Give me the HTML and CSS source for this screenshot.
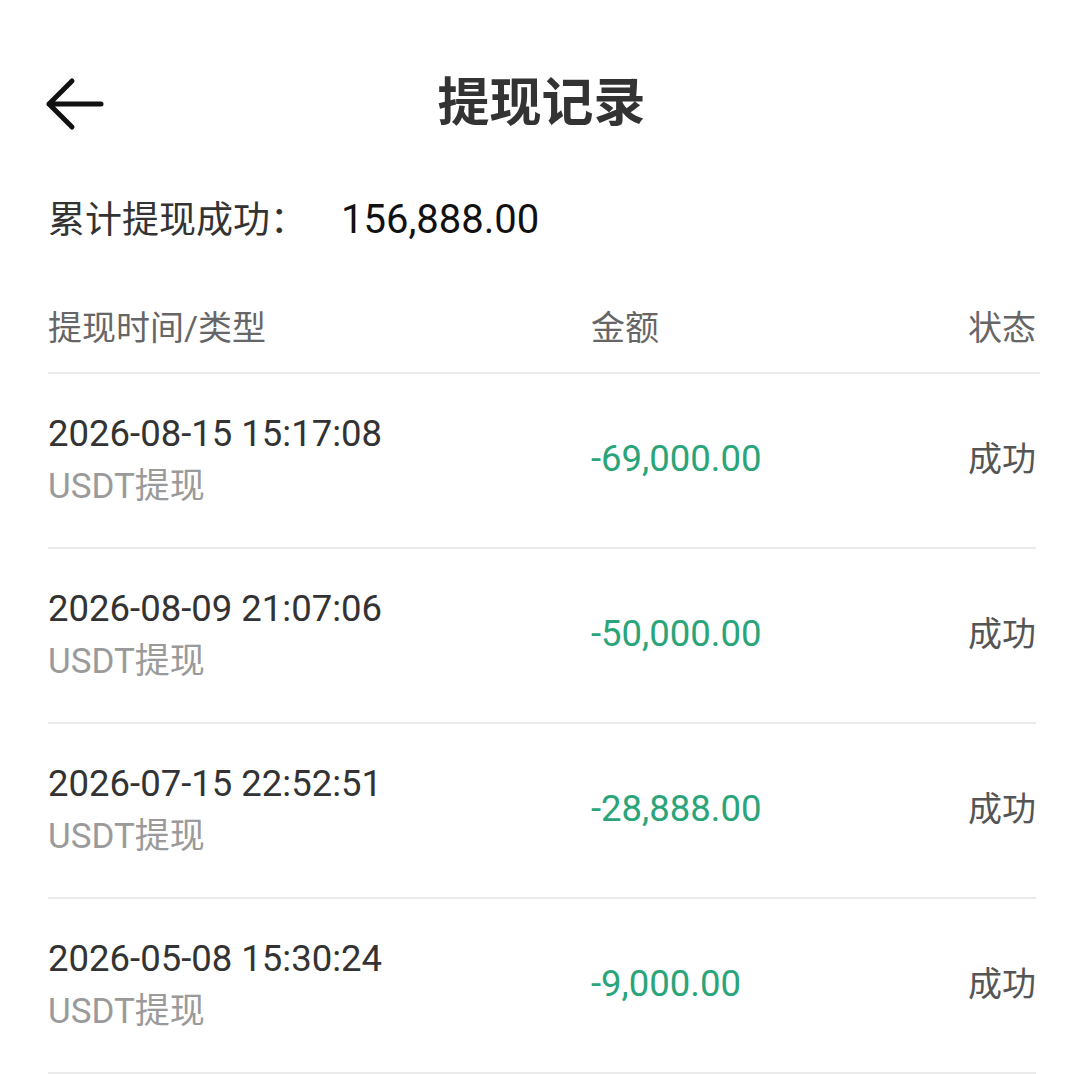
FILE: index.html
```html
<!DOCTYPE html>
<html lang="zh-CN">
<head>
  <meta charset="UTF-8" />
  <meta name="viewport" content="width=device-width, initial-scale=1.0"/>
  <title>提现记录</title>
  <link rel="stylesheet" href="styles.css">
</head>
<body>

  <div class="page">
    <!-- Top bar -->
    <div class="topbar">
      <span class="back">
        <svg width="60" height="54" viewBox="0 0 60 54">
          <path d="M56 27 H4 M27 4 L4 27 L27 50" fill="none" stroke="#111" stroke-width="5" stroke-linecap="round" stroke-linejoin="round"/>
        </svg>
      </span>
      <h1>提现记录</h1>
      <span></span>
    </div>

    <p class="total">累计提现成功：<span class="total-num">156,888.00</span></p>

    <div class="row head">
      <div class="col-time">提现时间/类型</div>
      <div class="col-amount">金额</div>
      <div class="col-status">状态</div>
    </div>

    <div class="row item">
      <div class="col-time">
        <div class="date">2026-08-15 15:17:08</div>
        <div class="type">USDT提现</div>
      </div>
      <div class="col-amount money">-69,000.00</div>
      <div class="col-status">成功</div>
    </div>

    <div class="row item">
      <div class="col-time">
        <div class="date">2026-08-09 21:07:06</div>
        <div class="type">USDT提现</div>
      </div>
      <div class="col-amount money">-50,000.00</div>
      <div class="col-status">成功</div>
    </div>

    <div class="row item">
      <div class="col-time">
        <div class="date">2026-07-15 22:52:51</div>
        <div class="type">USDT提现</div>
      </div>
      <div class="col-amount money">-28,888.00</div>
      <div class="col-status">成功</div>
    </div>

    <div class="row item">
      <div class="col-time">
        <div class="date">2026-05-08 15:30:24</div>
        <div class="type">USDT提现</div>
      </div>
      <div class="col-amount money">-9,000.00</div>
      <div class="col-status">成功</div>
    </div>
  </div>

</body>
</html>
```

FILE: styles.css
```css
* {
  box-sizing: border-box;
}

body {
  margin: 0;
  padding: 0;
  background: #fff;
  font-family: Roboto, "Noto Sans CJK SC", sans-serif;
  color: #333;
}

.page {
  padding: 0 44px 0 48px;
}

/* top bar */
.topbar {
  display: grid;
  grid-template-columns: 120px 1fr 120px;
  align-items: center;
  padding-top: 76px;
  margin-left: -3px;
}

.back {
  display: flex;
  align-items: center;
  height: 56px;
}

.topbar h1 {
  margin: 0;
  text-align: center;
  font-size: 52px;
  line-height: 56px;
  font-weight: 700;
  color: #333;
  padding-left: 2px;
}

.total {
  margin: 63px 0 0;
  font-size: 37px;
  line-height: 50px;
  color: #333;
}

.total-num {
  margin-left: 34px;
  font-size: 40px;
  color: #111;
}

/* table */
.row {
  display: grid;
  grid-template-columns: 543px 1fr auto;
  align-items: center;
  border-bottom: 2px solid #ebebeb;
}

.head {
  margin-top: 60px;
  padding-bottom: 22px;
  font-size: 34px;
  line-height: 44px;
  color: #666;
  margin-right: -4px;
}

.head .col-status {
  padding-right: 4px;
}

.item {
  height: 175px;
  padding-bottom: 5px;
}

.col-status {
  text-align: right;
}

.date {
  font-size: 36.5px;
  line-height: 53px;
  color: #333;
  padding-top: 3px;
}

.type {
  font-size: 35px;
  line-height: 53px;
  color: #9a9a9a;
}

.money {
  font-size: 36.5px;
  color: #2aa57a;
}

.item .col-status {
  font-size: 34px;
  color: #555;
  padding-bottom: 3px;
}
```
